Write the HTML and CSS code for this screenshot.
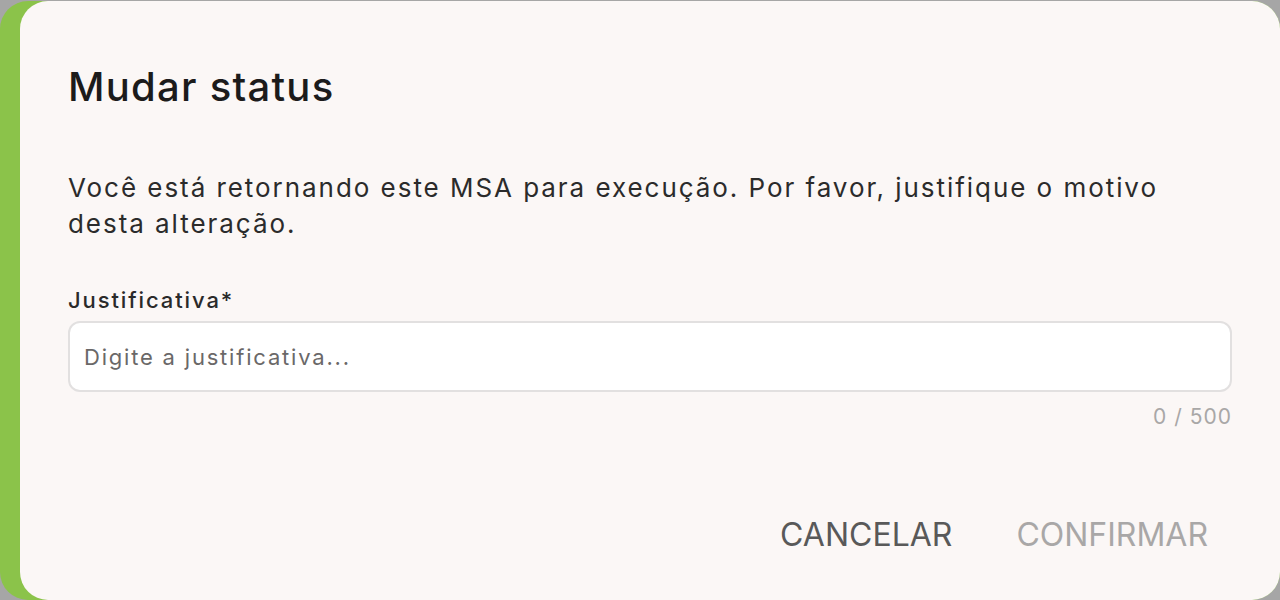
FILE: index.html
```html
<!DOCTYPE html>
<html lang="pt-BR">
<head>
<meta charset="utf-8">
<title>Mudar status</title>
<link rel="stylesheet" href="styles.css">
</head>
<body>
<div class="backdrop">
  <div class="dialog">
    <h1 class="title">Mudar status</h1>
    <p class="message">Você está retornando este MSA para execução. Por favor, justifique o motivo desta alteração.</p>
    <label class="label" for="just">Justificativa*</label>
    <input class="field" id="just" type="text" placeholder="Digite a justificativa...">
    <div class="counter">0 / 500</div>
    <div class="actions">
      <button class="btn btn-cancel">CANCELAR</button>
      <button class="btn btn-confirm">CONFIRMAR</button>
    </div>
  </div>
</div>
</body>
</html>
```
FILE: styles.css
```css
html, body {
  margin: 0;
  padding: 0;
  height: 600px;
  overflow: hidden;
  background: #a6a6a6;
  font-family: Inter, "Noto Sans", sans-serif;
}
.backdrop {
  margin-top: 1px;
  width: 1280px;
  height: 599px;
  background: #8bc34a;
  border-radius: 28px;
  display: flex;
}
.dialog {
  margin-left: 20px;
  width: 1260px;
  height: 599px;
  box-sizing: border-box;
  background: #fbf7f6;
  border-radius: 28px;
  padding: 60px 48px 0 48px;
  display: flex;
  flex-direction: column;
}
.title {
  margin: 0;
  font-size: 40px;
  font-weight: 500;
  color: #1c1b1b;
  letter-spacing: 1.25px;
  line-height: 52px;
}
.message {
  margin: 57px 0 0 0;
  font-size: 26px;
  line-height: 36px;
  color: #2b2b2b;
  letter-spacing: 1.95px;
}
.label {
  margin-top: 44px;
  font-size: 22px;
  font-weight: 500;
  color: #2a2a2a;
  letter-spacing: 1.9px;
  line-height: 28px;
}
.field {
  margin-top: 7px;
  height: 71px;
  box-sizing: border-box;
  border: 2px solid #e2e0e0;
  border-radius: 12px;
  background: #ffffff;
  padding: 0 14px;
  font-family: inherit;
  font-size: 22px;
  letter-spacing: 1.8px;
  color: #333;
  outline: none;
}
.field::placeholder {
  color: #6a6868;
}
.counter {
  margin-top: 13px;
  align-self: flex-end;
  font-size: 21px;
  color: #a9a7a7;
  letter-spacing: 1px;
  line-height: 24px;
}
.actions {
  margin-top: 86px;
  display: flex;
  justify-content: flex-end;
  gap: 16px;
}
.btn {
  background: none;
  border: none;
  padding: 0 24px;
  font-family: inherit;
  font-size: 32px;
  font-weight: 400;
  line-height: 40px;
  cursor: pointer;
}
.btn-cancel {
  color: #595959;
}
.btn-confirm {
  color: #a9a7a7;
}
```
